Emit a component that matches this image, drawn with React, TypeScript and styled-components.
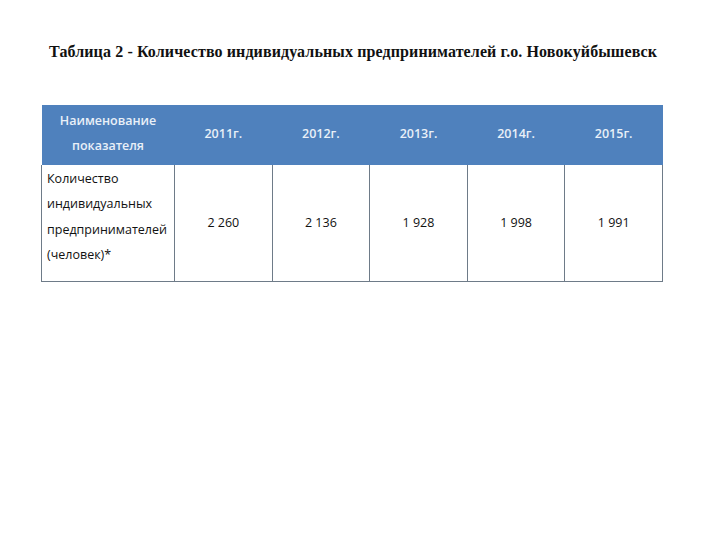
import React from "react";
import styled, { createGlobalStyle } from "styled-components";

const Global = createGlobalStyle`
  html, body { margin: 0; padding: 0; background: #fff; }
`;

const Page = styled.div`
  width: 720px;
  height: 540px;
  box-sizing: border-box;
  padding: 43px 0 0 41px;
  background: #fff;
`;

const Title = styled.h1`
  margin: 0 0 44px 8px;
  font-family: "Liberation Serif", serif;
  font-weight: bold;
  font-size: 16px;
  line-height: 18px;
  letter-spacing: 0.11px;
  color: #111;
  white-space: nowrap;
`;

const Table = styled.table`
  border-collapse: collapse;
  table-layout: fixed;
  width: 622px;
  font-family: "Open Sans", "Liberation Sans", sans-serif;
  font-size: 12.5px;
`;

const HeadCell = styled.th<{ $first?: boolean }>`
  background: #4f81bd;
  color: #e9f0f8;
  font-weight: 600;
  height: 60px;
  box-sizing: border-box;
  padding: 0 4px 4px;
  text-align: center;
  vertical-align: middle;
  line-height: 25px;
  width: ${(p) => (p.$first ? "133px" : "auto")};
`;

const Cell = styled.td<{ $first?: boolean }>`
  height: 116px;
  box-sizing: border-box;
  border-left: 1px solid #6e7b88;
  border-bottom: 1px solid #6e7b88;
  border-right: 1px solid #6e7b88;
  color: #111;
  text-align: ${(p) => (p.$first ? "left" : "center")};
  vertical-align: ${(p) => (p.$first ? "top" : "middle")};
  padding: ${(p) => (p.$first ? "1px 2px 0 5px" : "0 4px")};
  line-height: ${(p) => (p.$first ? "25.3px" : "16px")};
  white-space: nowrap;
`;

const years = ["2011г.", "2012г.", "2013г.", "2014г.", "2015г."];
const values = ["2 260", "2 136", "1 928", "1 998", "1 991"];

export default function App() {
  return (
    <Page>
      <Global />
      <Title>Таблица 2 - Количество индивидуальных предпринимателей г.о. Новокуйбышевск</Title>
      <Table>
        <thead>
          <tr>
            <HeadCell $first>
              Наименование
              <br />
              показателя
            </HeadCell>
            {years.map((y) => (
              <HeadCell key={y}>{y}</HeadCell>
            ))}
          </tr>
        </thead>
        <tbody>
          <tr>
            <Cell $first>
              Количество
              <br />
              индивидуальных
              <br />
              предпринимателей
              <br />
              (человек)*
            </Cell>
            {values.map((v) => (
              <Cell key={v}>{v}</Cell>
            ))}
          </tr>
        </tbody>
      </Table>
    </Page>
  );
}
